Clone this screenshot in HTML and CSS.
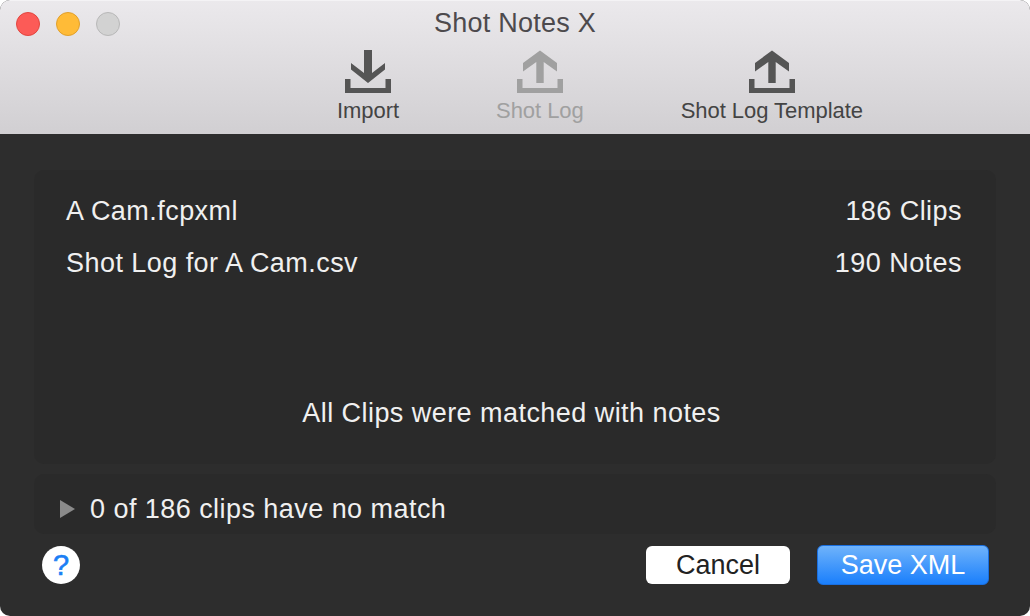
FILE: index.html
```html
<!DOCTYPE html>
<html lang="en">
<head>
<meta charset="utf-8">
<title>Shot Notes X</title>
<link rel="stylesheet" href="styles.css">
</head>
<body>
<div class="window">
  <header class="chrome">
    <div class="titlebar">
      <div class="lights">
        <span class="light red"></span>
        <span class="light yellow"></span>
        <span class="light gray"></span>
      </div>
      <div class="title">Shot Notes X</div>
    </div>
    <div class="toolbar">
      <div class="tool">
        <svg class="icon" width="46" height="43" viewBox="0 0 46 43"><path d="M19 0H27V23L40 13V19.5L23 33L6 19.5V13L19 23Z"/><path d="M0 29H5.5V38H40.5V29H46V43H0Z"/></svg>
        <span class="label">Import</span>
      </div>
      <div class="tool disabled">
        <svg class="icon" width="46" height="43" viewBox="0 0 46 43"><path d="M23 .5L40 13V21.5L26.7 12V33H19.3V12L6 21.5V13Z"/><path d="M0 29H5.5V38H40.5V29H46V43H0Z"/></svg>
        <span class="label">Shot Log</span>
      </div>
      <div class="tool">
        <svg class="icon" width="46" height="43" viewBox="0 0 46 43"><path d="M23 .5L40 13V21.5L26.7 12V33H19.3V12L6 21.5V13Z"/><path d="M0 29H5.5V38H40.5V29H46V43H0Z"/></svg>
        <span class="label">Shot Log Template</span>
      </div>
    </div>
  </header>
  <main class="content">
    <section class="panel summary">
      <div class="row"><span>A Cam.fcpxml</span><span>186 Clips</span></div>
      <div class="row"><span>Shot Log for A Cam.csv</span><span>190 Notes</span></div>
      <p class="status">All Clips were matched with notes</p>
    </section>
    <section class="panel disclosure">
      <span class="triangle"></span>
      <span>0 of 186 clips have no match</span>
    </section>
    <footer class="actions">
      <button class="help" type="button">?</button>
      <div class="buttons">
        <button class="btn cancel" type="button">Cancel</button>
        <button class="btn save" type="button">Save XML</button>
      </div>
    </footer>
  </main>
</div>
</body>
</html>
```
FILE: styles.css
```css
* { box-sizing: border-box; }
html, body { margin: 0; height: 100%; background: #fff; }
body { font-family: "Liberation Sans", Arial, sans-serif; overflow: hidden; }

.window {
  width: 1030px;
  height: 616px;
  border-radius: 10px;
  overflow: hidden;
  display: flex;
  flex-direction: column;
  background: #2d2d2d;
}

.chrome {
  height: 134px;
  flex: none;
  background: linear-gradient(#ebe9ec, #d1cfd2);
  border-top: 1px solid #f4f3f5;
}

.titlebar {
  height: 49px;
  display: grid;
  grid-template-columns: 1fr auto 1fr;
  align-items: center;
  padding: 0 16px;
}
.lights { display: flex; gap: 16px; margin-top: -4px; }
.light { width: 24px; height: 24px; border-radius: 50%; border: 1px solid; }
.red { background: #fc5b57; border-color: #e2463f; }
.yellow { background: #ffbb37; border-color: #e1a02c; }
.gray { background: #d2d2d2; border-color: #b8b8b8; }
.title { font-size: 27px; color: #4d4a4d; margin-top: -4px; letter-spacing: .25px; }

.toolbar {
  display: flex;
  gap: 97px;
  padding-left: 337px;
}
.tool { display: flex; flex-direction: column; align-items: center; }
.icon { display: block; fill: #555; }
.label { font-size: 22px; line-height: 24px; margin-top: 6px; color: #444; letter-spacing: -.05px; white-space: nowrap; }
.disabled .icon { fill: #a0a0a0; }
.disabled .label { color: #a0a0a0; }

.content {
  flex: 1;
  padding: 36px 34px 0;
  color: #f0f0f0;
  font-size: 27px;
  letter-spacing: .45px;
}
.panel { background: #2a2a2a; border-radius: 10px; }
.summary {
  height: 294px;
  padding: 15px 34px 0 32px;
  display: flex;
  flex-direction: column;
}
.row { display: flex; justify-content: space-between; height: 52px; line-height: 52px; }
.status { margin: 98px 0 0; text-align: center; line-height: 52px; padding-right: 5px; }

.disclosure {
  height: 60px;
  margin-top: 10px;
  display: flex;
  align-items: center;
  padding: 10px 0 0 26px;
  gap: 15px;
}
.triangle {
  width: 0; height: 0;
  border-left: 15px solid #8a8a8a;
  border-top: 9px solid transparent;
  border-bottom: 9px solid transparent;
}

.actions {
  display: flex;
  justify-content: space-between;
  align-items: center;
  padding: 11px 7px 0 8px;
}
.help {
  width: 38px; height: 38px;
  border: 0; border-radius: 50%;
  background: #fff;
  color: #1c7ff5;
  font: 400 29px/36px "Liberation Sans", Arial, sans-serif;
  padding: 0;
  -webkit-text-stroke: .6px #1c7ff5;
}
.buttons { display: flex; align-items: center; gap: 27px; }
.btn {
  font-family: inherit;
  font-size: 27px;
  padding: 0;
  border-radius: 6px;
  letter-spacing: 0;
}
.cancel { width: 144px; height: 38px; background: #fff; color: #222; border: 0; }
.save {
  width: 172px; height: 40px;
  color: #fff;
  border: 1px solid #1a6fe0;
  background: linear-gradient(#6fb3fb, #1a7ffc);
}
```
